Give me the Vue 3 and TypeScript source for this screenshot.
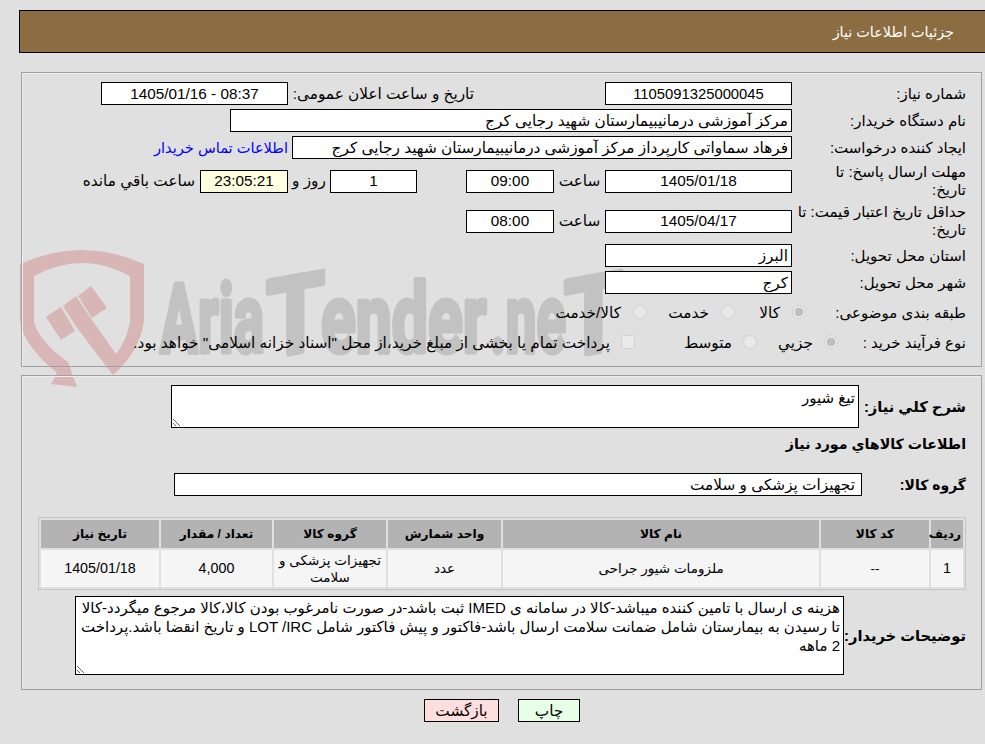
<template>
  <div class="page" dir="rtl">
    <!-- watermark -->
    <svg class="watermark" width="640" height="200" viewBox="0 0 640 200" aria-hidden="true">
      <g fill="#d9b6b6">
        <path d="M20 28 Q82 0 144 28 L144 85 Q140 115 113 139 L77 92 L63 70 L76 60 L92 84 L116 118 Q128 102 130 85 L130 40 Q82 14 34 40 L34 85 Q38 105 68 126 L77 151 L51 148 L57 137 Q24 110 20 85 Z" />
        <path d="M46 81 L61 71 L75 95 L61 104 Z" />
        <path d="M78 60 L91 50 L107 72 L92 82 Z" />
      </g>
      <g class="wordmark">
        <text transform="translate(160 116) scale(0.59 1)">Aria</text>
        <text class="big-t" transform="translate(266 122) skewY(-10) scale(0.88 1)">T</text>
        <text transform="translate(321 116) scale(0.67 1)">ender</text>
        <text transform="translate(490 116) scale(0.57 1)">.ne</text>
        <text class="big-t" transform="translate(564 122) skewY(-10) scale(0.88 1)">T</text>
      </g>
    </svg>

    <div class="title-bar">جزئیات اطلاعات نیاز</div>

    <div class="panel panel-info">
      <div class="row">
        <span class="label">شماره نیاز:</span>
        <input class="field date need-no" readonly value="1105091325000045" />
        <span class="public-label">تاریخ و ساعت اعلان عمومی:</span>
        <input class="field date" readonly value="08:37 - 1405/01/16" />
      </div>
      <div class="row">
        <span class="label">نام دستگاه خریدار:</span>
        <input class="field buyer" readonly value="مرکز آموزشی درمانیبیمارستان شهید رجایی کرج" />
      </div>
      <div class="row">
        <span class="label">ایجاد کننده درخواست:</span>
        <input class="field creator" readonly value="فرهاد سماواتی کارپرداز مرکز آموزشی درمانیبیمارستان شهید رجایی کرج" />
        <a class="contact" href="#">اطلاعات تماس خریدار</a>
      </div>
      <div class="row tall">
        <span class="label">مهلت ارسال پاسخ: تا<br />تاریخ:</span>
        <input class="field date" readonly value="1405/01/18" />
        <span class="hour">ساعت</span>
        <input class="field small" readonly value="09:00" />
        <input class="field small day" readonly value="1" />
        <span class="day-label">روز و</span>
        <input class="field small timer" readonly value="23:05:21" />
        <span class="remain">ساعت باقي مانده</span>
      </div>
      <div class="row tall validity">
        <span class="label">حداقل تاریخ اعتبار قیمت: تا<br />تاریخ:</span>
        <input class="field date" readonly value="1405/04/17" />
        <span class="hour">ساعت</span>
        <input class="field small" readonly value="08:00" />
      </div>
      <div class="row">
        <span class="label">استان محل تحویل:</span>
        <input class="field place" readonly value="البرز" />
      </div>
      <div class="row">
        <span class="label">شهر محل تحویل:</span>
        <input class="field place" readonly value="کرج" />
      </div>
      <div class="row options subject">
        <span class="label">طبقه بندی موضوعی:</span>
        <label v-for="opt in subjectOptions" :key="opt.text" class="opt" :style="{ width: opt.width + 'px' }">
          <input type="radio" name="subject" disabled :checked="opt.checked" />
          <span>{{ opt.text }}</span>
        </label>
      </div>
      <div class="row options process">
        <span class="label">نوع فرآیند خرید :</span>
        <label class="opt opt-a"><input type="radio" name="process" disabled checked /><span>جزیي</span></label>
        <label class="opt opt-b"><input type="radio" name="process" disabled /><span>متوسط</span></label>
        <label class="opt opt-c"><input type="checkbox" disabled /><span>پرداخت تمام یا بخشی از مبلغ خرید،از محل "اسناد خزانه اسلامی" خواهد بود.</span></label>
      </div>
    </div>

    <div class="panel panel-goods">
      <div class="row desc-row">
        <span class="label-b">شرح کلي نیاز:</span>
        <textarea class="area area-title" readonly>تیغ شیور</textarea>
      </div>
      <div class="goods-heading">اطلاعات کالاهاي مورد نیاز</div>
      <div class="row group-row">
        <span class="label-b group-label">گروه کالا:</span>
        <input class="field group" readonly value="تجهیزات پزشکی و سلامت" />
      </div>

      <table class="goods">
        <colgroup>
          <col v-for="w in colWidths" :key="w" :style="{ width: w + 'px' }" />
        </colgroup>
        <thead>
          <tr>
            <th v-for="h in headers" :key="h">{{ h }}</th>
          </tr>
        </thead>
        <tbody>
          <tr>
            <td class="num">1</td>
            <td>--</td>
            <td>ملزومات شیور جراحی</td>
            <td>عدد</td>
            <td>تجهیزات پزشکی و سلامت</td>
            <td class="num">4,000</td>
            <td class="num">1405/01/18</td>
          </tr>
        </tbody>
      </table>

      <div class="row note-row">
        <span class="label-b note-label">توضیحات خریدار:</span>
        <textarea class="area area-note" readonly>{{ note }}</textarea>
      </div>
    </div>

    <div class="actions">
      <button class="btn print" type="button">چاپ</button>
      <button class="btn back" type="button">بازگشت</button>
    </div>
  </div>
</template>

<script setup lang="ts">
interface SubjectOption {
  text: string
  width: number
  checked: boolean
}

const subjectOptions: SubjectOption[] = [
  { text: 'کالا', width: 71, checked: true },
  { text: 'خدمت', width: 88, checked: false },
  { text: 'کالا/خدمت', width: 100, checked: false },
]

const headers = ['ردیف', 'کد کالا', 'نام کالا', 'واحد شمارش', 'گروه کالا', 'تعداد / مقدار', 'تاریخ نیاز']
const colWidths = [32, 108, 316, 113, 112, 111, 118]

const note =
  'هزینه ی ارسال با تامین کننده میباشد-کالا در سامانه ی IMED ثبت باشد-در صورت نامرغوب بودن کالا،کالا مرجوع میگردد-کالا تا رسیدن به بیمارستان شامل ضمانت سلامت ارسال باشد-فاکتور و پیش فاکتور شامل LOT /IRC و تاریخ انقضا باشد.پرداخت 2 ماهه'
</script>

<style>
html,
body {
  margin: 0;
  background: #e0e0e0;
}
</style>

<style scoped>
.page {
  position: relative;
  height: 744px;
  overflow: hidden;
  background: #e0e0e0;
  padding-top: 10px;
  box-sizing: border-box;
  color: #000;
  font: 15.3px/18px "Liberation Sans", "DejaVu Sans", sans-serif;
}

.watermark {
  position: absolute;
  left: 0;
  top: 236px;
  direction: ltr;
}

.wordmark {
  fill: #c2c2c2;
  stroke: #c2c2c2;
  stroke-width: 5px;
  stroke-linejoin: round;
  font-family: Roboto, "DejaVu Sans", sans-serif;
  font-size: 96px;
  font-weight: 700;
}

.big-t {
  font-size: 108px;
}

.title-bar {
  position: relative;
  margin-left: 19px;
  height: 43px;
  line-height: 43px;
  box-sizing: border-box;
  padding-right: 31px;
  background: #8c6d42;
  border: 1px solid #000;
  border-right: 0;
  color: #fff;
  font-size: 14.4px;
}

.panel {
  position: relative;
  box-sizing: border-box;
  width: 961px;
  margin-right: 3px;
  border: 1px solid #a0a0a0;
  box-shadow: inset 1px 1px 0 #eee;
}

.panel-info {
  margin-top: 19px;
  height: 295px;
  padding: 9px 15px 0 0;
}

.panel-goods {
  margin-top: 8px;
  height: 315px;
  padding: 9px 15px 0 0;
}

.row {
  display: flex;
  align-items: center;
  min-height: 23px;
  margin-bottom: 4px;
}

.tall {
  min-height: 36px;
}

.validity {
  margin-bottom: 5px;
}

.label {
  flex: none;
  width: 174px;
  box-sizing: border-box;
  font-size: 15px;
  white-space: nowrap;
}

.field {
  flex: none;
  box-sizing: border-box;
  height: 23px;
  margin: 0;
  padding: 1px 3px;
  border: 1px solid #000;
  border-radius: 0;
  outline: none;
  background: #fff;
  color: #000;
  font: inherit;
}

.date {
  width: 187px;
  text-align: center;
}

.need-no {
  font-size: 14.8px;
}

.buyer {
  width: 562px;
}

.creator {
  width: 500px;
}

.place {
  width: 187px;
}

.small {
  width: 88px;
  text-align: center;
}

.public-label {
  flex: none;
  box-sizing: border-box;
  width: 317px;
  padding-right: 131px;
  white-space: nowrap;
}

.contact {
  margin-right: 4px;
  color: #00f;
  font-size: 14.6px;
  text-decoration: none;
  white-space: nowrap;
}

.hour {
  flex: none;
  width: 51px;
  text-align: center;
}

.day {
  width: 87px;
  margin-right: 49px;
}

.day-label {
  flex: none;
  width: 42px;
  text-align: center;
}

.timer {
  background: #ffffe0;
}

.remain {
  margin-right: 5px;
  white-space: nowrap;
}

.options {
  min-height: 28px;
}

.subject {
  margin-top: 5px;
  margin-bottom: 2px;
}

.subject .label {
  width: 160px;
}

.process .label {
  width: 128px;
}

.opt {
  display: flex;
  align-items: center;
  flex: none;
  white-space: nowrap;
}

.opt input {
  appearance: none;
  flex: none;
  width: 14px;
  height: 14px;
  margin: -3px 0 0;
  border: 1px solid #d2d2d2;
  background: #e9e9e9;
  border-radius: 50%;
}

.opt input[type='radio']:checked {
  background: radial-gradient(circle, #bdbdbd 0 4px, #e9e9e9 4.6px);
}

.opt input[type='checkbox'] {
  border-radius: 2px;
}

.subject .opt span {
  margin-right: 12px;
}

.opt-a {
  width: 81px;
}

.opt-a span,
.opt-b span,
.opt-c span {
  margin-right: 11px;
}

.opt-b {
  width: 122px;
}

.label-b {
  flex: none;
  font-weight: 700;
  font-size: 14.7px;
  white-space: nowrap;
}

.area {
  flex: none;
  display: block;
  box-sizing: border-box;
  margin: 0;
  padding: 1px 3px;
  border: 1px solid #000;
  border-radius: 0;
  outline: none;
  background: #fff;
  color: #000;
  font: inherit;
  font-size: 15px;
  line-height: 19px;
  resize: both;
}

.desc-row {
  margin-bottom: 6px;
}

.desc-row .label-b {
  width: 107px;
}

.area-title {
  width: 688px;
  height: 43px;
  padding-top: 2px;
}

.goods-heading {
  font-weight: 700;
  font-size: 14.2px;
  line-height: 20px;
}

.group-row {
  margin-top: 19px;
  margin-bottom: 21px;
}

.group-label {
  width: 104px;
  font-size: 14px;
}

.group {
  width: 688px;
  padding-right: 6px;
}

.goods {
  table-layout: fixed;
  box-sizing: border-box;
  width: 928px;
  border: 1px solid #c4c4c4;
  border-spacing: 2px;
  border-collapse: separate;
  font-size: 13.5px;
  line-height: 17px;
}

.goods th {
  box-sizing: border-box;
  height: 28px;
  padding: 0 2px;
  background: #b3b3b3;
  font-size: 12.2px;
  font-weight: 700;
}

.goods td {
  box-sizing: border-box;
  height: 37px;
  padding: 0 3px;
  background: #f5f5f5;
  text-align: center;
}

.goods td.num {
  font-size: 14.3px;
}

.note-row {
  margin-top: 6px;
}

.note-label {
  width: 122px;
}

.area-note {
  width: 769px;
  height: 79px;
}

.actions {
  display: flex;
  justify-content: center;
  gap: 19px;
  margin-top: 9px;
  padding-left: 19px;
}

.btn {
  box-sizing: border-box;
  height: 23px;
  padding: 0;
  border: 1px solid #000;
  border-radius: 0;
  color: #000;
  font: inherit;
}

.print {
  width: 62px;
  background: #e8ffe8;
}

.back {
  width: 75px;
  background: #ffdede;
}
</style>
